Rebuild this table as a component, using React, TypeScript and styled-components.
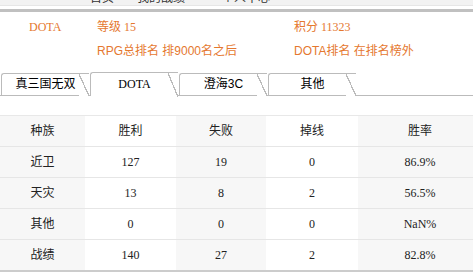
import styled, { createGlobalStyle, css } from "styled-components";

const GlobalStyle = createGlobalStyle`
  html, body {
    margin: 0;
    padding: 0;
    background: #fff;
    overflow: hidden;
  }
`;

const SERIF = `"Liberation Serif", "Noto Sans CJK SC", serif`;
const SANS = `"Liberation Sans", "Noto Sans CJK SC", sans-serif`;

const navLinks = [
  { label: "首页", offset: 90 },
  { label: "我的战绩", offset: 23 },
  { label: "个人中心", offset: 37 },
];

const tabs = ["真三国无双", "DOTA", "澄海3C", "其他"];

const rows = [
  { side: "近卫", win: 127, lose: 19, drop: 0, rate: "86.9%" },
  { side: "天灾", win: 13, lose: 8, drop: 2, rate: "56.5%" },
  { side: "其他", win: 0, lose: 0, drop: 0, rate: "NaN%" },
  { side: "战绩", win: 140, lose: 27, drop: 2, rate: "82.8%" },
];

export default function App() {
  return (
    <>
      <GlobalStyle />
      <Page>
        <TopNav>
          {navLinks.map((n) => (
            <NavLink key={n.label} $offset={n.offset}>
              {n.label}
            </NavLink>
          ))}
        </TopNav>
        <Divider />
        <Info>
          <InfoCell>DOTA</InfoCell>
          <InfoCell>等级 15</InfoCell>
          <InfoCell>积分 11323</InfoCell>
          <InfoCell />
          <InfoCell $sans>RPG总排名 排9000名之后</InfoCell>
          <InfoCell $sans>DOTA排名 在排名榜外</InfoCell>
        </Info>
        <TabBar>
          {tabs.map((t) => (
            <Tab key={t} $active={t === "DOTA"} $serif={t === "DOTA"}>
              {t}
            </Tab>
          ))}
        </TabBar>
        <Table>
          <thead>
            <tr>
              <Th>种族</Th>
              <Th>胜利</Th>
              <Th>失败</Th>
              <Th>掉线</Th>
              <Th>胜率</Th>
            </tr>
          </thead>
          <tbody>
            {rows.map((r) => (
              <tr key={r.side}>
                <Td>{r.side}</Td>
                <Td>{r.win}</Td>
                <Td>{r.lose}</Td>
                <Td>{r.drop}</Td>
                <Td>{r.rate}</Td>
              </tr>
            ))}
          </tbody>
        </Table>
      </Page>
    </>
  );
}

const Page = styled.div`
  width: 482px;
  height: 277px;
  background: #fff;
`;

const TopNav = styled.div`
  height: 5px;
  background: #f2f2f2;
  border-bottom: 1px solid #e6e6e6;
  overflow: hidden;
  display: flex;
  align-items: flex-end;
`;

const NavLink = styled.span<{ $offset: number }>`
  font: 12px/12px ${SANS};
  color: #333;
  margin-left: ${(p) => p.$offset}px;
  margin-bottom: 1px;
  flex: none;
`;

const Divider = styled.div`
  height: 3px;
  margin-top: 3px;
  background: #c0c0c0;
`;

const Info = styled.div`
  display: grid;
  grid-template-columns: 68px 197px auto;
  grid-auto-rows: 24px;
  padding: 3px 0 0 29px;
  height: 56px;
`;

const InfoCell = styled.div<{ $sans?: boolean }>`
  font-size: 12px;
  line-height: 24px;
  font-family: ${(p) => (p.$sans ? SANS : SERIF)};
  color: #e5782f;
  white-space: nowrap;
`;

const TabBar = styled.div`
  display: flex;
  align-items: flex-end;
  height: 24px;
  border-bottom: 1px solid #bbb;
  padding-left: 1px;
`;

const Tab = styled.div<{ $active?: boolean; $serif?: boolean }>`
  position: relative;
  width: 78px;
  height: 22px;
  margin-right: 11px;
  padding-left: 10px;
  box-sizing: border-box;
  border: 1px solid #bbb;
  border-right: none;
  border-bottom: none;
  border-top-left-radius: 3px;
  background: #fff;
  font: 12px/21px ${(p) => (p.$serif ? SERIF : SANS)};
  color: #000;
  text-align: center;
  white-space: nowrap;

  &::after {
    content: "";
    position: absolute;
    top: -1px;
    right: -10px;
    width: 10px;
    height: 23px;
    border-top: 1px solid #bbb;
    box-sizing: border-box;
    background: linear-gradient(
      to top right,
      #fff 0,
      #fff calc(50% - 0.6px),
      #bbb calc(50% - 0.6px),
      #bbb calc(50% + 0.6px),
      transparent calc(50% + 0.6px)
    );
  }

  ${(p) =>
    p.$active &&
    css`
      height: 24px;
      margin-bottom: -1px;
      line-height: 23px;
      z-index: 1;

      &::after {
        height: 25px;
      }
    `}
`;

const Table = styled.table`
  margin-top: 19px;
  width: 482px;
  border-collapse: collapse;
  table-layout: fixed;
  border-top: 1px solid #e8e8e8;
  border-bottom: 2px solid #ccc;

  th:nth-child(1), td:nth-child(1) {
    width: 85px;
  }
  th:nth-child(2), td:nth-child(2) {
    width: 91px;
  }
  th:nth-child(3), td:nth-child(3) {
    width: 90px;
  }
  th:nth-child(4), td:nth-child(4) {
    width: 92px;
  }

  th:nth-child(odd), td:nth-child(odd) {
    background: #f7f7f7;
  }

  tr + tr td, tbody tr:first-child td {
    border-top: 1px solid #e6e6e6;
  }
`;

const cell = css`
  height: 30px;
  padding: 0;
  text-align: center;
  font: 12px/30px ${SERIF};
  color: #222;
`;

const Th = styled.th`
  ${cell}
  font-weight: normal;
`;

const Td = styled.td`
  ${cell}
`;
